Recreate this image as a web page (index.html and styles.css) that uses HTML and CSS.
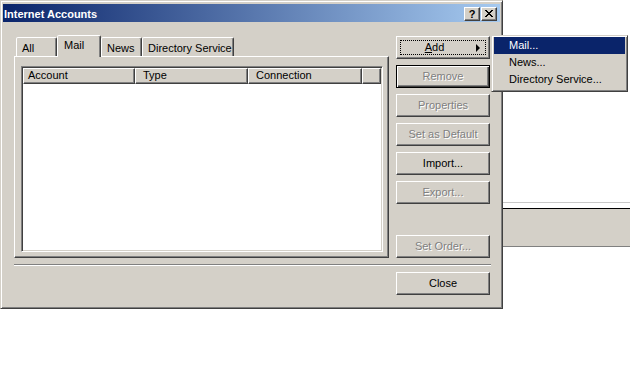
FILE: index.html
```html
<!DOCTYPE html>
<html>
<head>
<meta charset="utf-8">
<link rel="stylesheet" href="styles.css">
</head>
<body>
<div class="desktop">
  <div class="dialog">
    <div class="titlebar">
      <span class="title">Internet Accounts</span>
      <div class="caps">
        <span class="cap cap-help">?</span>
        <span class="cap cap-close"><svg width="8" height="7" viewBox="0 0 8 7"><path d="M0 0h2v1h-2zM6 0h2v1h-2zM1 1h2v1h-2zM5 1h2v1h-2zM2 2h4v1h-4zM3 3h2v1h-2zM2 4h4v1h-4zM1 5h2v1h-2zM5 5h2v1h-2zM0 6h2v1h-2zM6 6h2v1h-2z" fill="#000"/></svg></span>
      </div>
    </div>
    <div class="body">
      <div class="leftcol">
        <div class="tabs">
          <span class="tab tab-all">All</span>
          <span class="tab tab-mail selected">Mail</span>
          <span class="tab tab-news">News</span>
          <span class="tab tab-dir">Directory Service</span>
        </div>
        <div class="panel">
          <div class="list">
            <div class="header">
              <span class="hcell hc-account">Account</span>
              <span class="hcell hc-type">Type</span>
              <span class="hcell hc-conn">Connection</span>
              <span class="hcell hc-rest"></span>
            </div>
          </div>
        </div>
      </div>
      <div class="buttons">
        <span class="btn btn-add"><span class="focus"><span class="addlabel"><u>A</u>dd</span><span class="arrow"></span></span></span>
        <span class="btn default disabled">Remove</span>
        <span class="btn disabled">Properties</span>
        <span class="btn disabled">Set as Default</span>
        <span class="btn">Import...</span>
        <span class="btn disabled">Export...</span>
        <span class="btn disabled btn-order">Set Order...</span>
      </div>
    </div>
    <div class="sep"></div>
    <div class="footer">
      <span class="btn">Close</span>
    </div>
  </div>
  <div class="bgwin"></div>
  <div class="menu">
    <div class="mitem active">Mail...</div>
    <div class="mitem">News...</div>
    <div class="mitem">Directory Service...</div>
  </div>
</div>
</body>
</html>
```
FILE: styles.css
```css
body {
  margin: 0;
  background: #fff;
  font-family: "Liberation Sans", Arial, sans-serif;
  font-size: 11px;
  color: #000;
}

.desktop {
  position: relative;
  width: 630px;
  height: 384px;
  overflow: hidden;
}

.dialog {
  width: 503px;
  height: 309px;
  box-sizing: border-box;
  background: #d4d0c8;
  border: 1px solid;
  border-color: #d4d0c8 #404040 #404040 #d4d0c8;
  box-shadow: inset 1px 1px #fff, inset -1px -1px #808080;
  padding: 3px 2px 2px 2px;
  display: flex;
  flex-direction: column;
}

.titlebar {
  height: 18px;
  flex: none;
  background: linear-gradient(to right, #0a246a, #a6caf0);
  display: flex;
  align-items: center;
  justify-content: space-between;
  padding: 0 3px 0 1px;
}

.title {
  color: #fff;
  font-weight: bold;
  font-size: 11px;
  line-height: 14px;
  padding-top: 2px;
}

.caps {
  display: flex;
  gap: 1px;
  padding-top: 1px;
}

.cap {
  width: 16px;
  height: 14px;
  box-sizing: border-box;
  background: #d4d0c8;
  border: 1px solid;
  border-color: #fff #404040 #404040 #fff;
  box-shadow: inset -1px -1px #808080;
  display: flex;
  align-items: center;
  justify-content: center;
}

.cap-help {
  font-weight: bold;
  font-size: 11px;
  line-height: 12px;
  color: #000;
}

.body {
  display: flex;
  padding: 13px 0 0 11px;
  gap: 7px;
}

.leftcol {
  width: 375px;
  display: flex;
  flex-direction: column;
}

.tabs {
  height: 21px;
  display: flex;
  align-items: flex-end;
  padding-left: 2px;
  position: relative;
  z-index: 1;
}

.tab {
  height: 19px;
  box-sizing: border-box;
  border: 1px solid;
  border-bottom: none;
  border-color: #fff #404040 transparent #fff;
  border-radius: 2px 2px 0 0;
  box-shadow: inset -1px 0 #808080;
  padding: 4px 0 0 5px;
  line-height: 12px;
  background: #d4d0c8;
}

.tab-all { width: 41px; }
.tab-mail { width: 44px; }
.tab-news { width: 41px; }
.tab-dir { width: 92px; }

.tab.selected {
  height: 22px;
  margin-bottom: -1px;
  padding-top: 3px;
  padding-left: 6px;
}

.panel {
  height: 202px;
  box-sizing: border-box;
  border: 1px solid;
  border-color: #fff #404040 #404040 #fff;
  box-shadow: inset -1px -1px #808080;
  padding: 9px 5px 5px 6px;
}

.list {
  height: 186px;
  box-sizing: border-box;
  background: #fff;
  border: 1px solid;
  border-color: #808080 #fff #fff #808080;
  box-shadow: inset 1px 1px #404040, inset -1px -1px #d4d0c8;
  padding: 1px;
}

.header {
  display: flex;
  height: 16px;
}

.hcell {
  height: 16px;
  box-sizing: border-box;
  background: #d4d0c8;
  border: 1px solid;
  border-color: #fff #404040 #404040 #fff;
  box-shadow: inset -1px -1px #808080;
  line-height: 13px;
  padding-left: 7px;
}

.hc-account { width: 112px; padding-left: 4px; }
.hc-type { width: 113px; }
.hc-conn { width: 114px; }
.hc-rest { flex: 1; }

.buttons {
  width: 94px;
  margin-top: 1px;
  display: flex;
  flex-direction: column;
  gap: 6px;
}

.btn {
  display: flex;
  align-items: center;
  justify-content: center;
  width: 94px;
  height: 23px;
  box-sizing: border-box;
  background: #d4d0c8;
  border: 1px solid;
  border-color: #fff #404040 #404040 #fff;
  box-shadow: inset -1px -1px #808080;
  line-height: 13px;
}

.btn.default {
  border-color: #000;
  box-shadow: inset 1px 1px #fff, inset -1px -1px #404040, inset -2px -2px #808080;
}

.btn.disabled {
  color: #808080;
  text-shadow: 1px 1px 0 #fff;
}

.btn-order {
  margin-top: auto;
}

.btn-add {
  padding: 3px;
}

.focus {
  flex: 1;
  align-self: stretch;
  border: 1px dotted #000;
  display: flex;
  align-items: center;
  position: relative;
}

.addlabel {
  flex: 1;
  text-align: center;
  padding-right: 8px;
}

.arrow {
  width: 0;
  height: 0;
  border-left: 4px solid #000;
  border-top: 4px solid transparent;
  border-bottom: 4px solid transparent;
  margin-right: 5px;
}

.sep {
  margin: 6px 9px 0 11px;
  height: 1px;
  border-top: 1px solid #808080;
  border-bottom: 1px solid #fff;
  height: 0;
}

.footer {
  display: flex;
  justify-content: flex-end;
  padding: 6px 10px 0 0;
}

.bgwin {
  position: absolute;
  left: 503px;
  top: 202px;
  width: 127px;
  height: 45px;
  box-sizing: border-box;
  border-top: 1px solid #c8c8c8;
  border-bottom: 1px solid #808080;
  background: linear-gradient(#fff 0, #fff 5px, #000 5px, #000 6px, #d4d0c8 6px);
}

.menu {
  position: absolute;
  left: 491px;
  top: 35px;
  width: 137px;
  box-sizing: border-box;
  background: #d4d0c8;
  border: 1px solid;
  border-color: #d4d0c8 #404040 #404040 #d4d0c8;
  box-shadow: inset 1px 1px #fff, inset -1px -1px #808080;
  padding: 1px 2px 3px 2px;
}

.mitem {
  height: 17px;
  line-height: 17px;
  padding-left: 15px;
  white-space: nowrap;
}

.mitem.active {
  background: #0a246a;
  color: #fff;
}
```
